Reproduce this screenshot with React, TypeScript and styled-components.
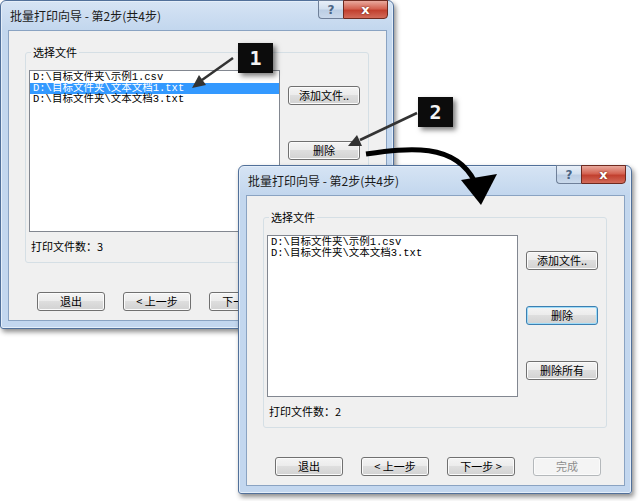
import React from 'react';
import styled, { createGlobalStyle } from 'styled-components';

const Global = createGlobalStyle`
  html, body { margin: 0; padding: 0; background: #fff; }
  body { font-family: "Noto Sans CJK SC", "Noto Sans", sans-serif; }
`;

const Canvas = styled.div`
  position: relative;
  width: 640px;
  height: 501px;
  overflow: hidden;
  background: #fff;
`;

const Window = styled.div<{ $x: number; $y: number }>`
  position: absolute;
  left: ${p => p.$x}px;
  top: ${p => p.$y}px;
  width: 394px;
  height: 329px;
  box-sizing: border-box;
  display: flex;
  flex-direction: column;
  border: 1px solid #51709a;
  border-radius: 6px 6px 3px 3px;
  background: linear-gradient(#d6e4f4, #c3d7ee 28px, #c3d7ef);
  box-shadow: 2px 3px 5px rgba(0, 0, 0, 0.45), inset 0 0 0 1px #e4eef9;
  padding: 0 6px 7px 7px;
`;

const TitleBar = styled.div`
  height: 29px;
  flex: none;
  display: flex;
  justify-content: space-between;
  align-items: flex-start;
  margin-right: -1px;
`;

const TitleText = styled.div`
  margin: 7px 0 0 2px;
  font-size: 12px;
  line-height: 16px;
  color: #1a1a1a;
`;

const CaptionButtons = styled.div`
  display: flex;
  margin-top: -1px;
`;

const HelpBtn = styled.div`
  width: 25px;
  height: 19px;
  box-sizing: border-box;
  border: 1px solid #6f8099;
  border-right: none;
  border-radius: 0 0 0 4px;
  background: linear-gradient(#e8eff8, #d3e0ef 45%, #bccee4 55%, #cad9eb);
  display: flex;
  align-items: center;
  justify-content: center;
  font: bold 12px "DejaVu Sans", sans-serif;
  color: #4b6584;
`;

const CloseBtn = styled.div`
  width: 45px;
  height: 19px;
  box-sizing: border-box;
  border: 1px solid #6e2a20;
  border-radius: 0 0 4px 0;
  background: linear-gradient(#e9a99d, #d46352 45%, #c2402f 55%, #d26b5a);
  display: flex;
  align-items: center;
  justify-content: center;
  font: bold 13px "DejaVu Sans", sans-serif;
  color: #fff;
  text-shadow: 0 0 2px #5a1a12;
`;

const Client = styled.div`
  flex: 1;
  background: #f0f0f0;
  border: 1px solid #8aa3c2;
  padding: 21px 0 0 16px;
  display: flex;
  flex-direction: column;
`;

const GroupBox = styled.div`
  position: relative;
  width: 344px;
  height: 211px;
  box-sizing: border-box;
  border: 1px solid #d5dfe5;
  border-radius: 3px;
  padding: 17px 0 0 3px;
  display: flex;
  flex-direction: column;
`;

const GroupLabel = styled.span`
  position: absolute;
  top: -8px;
  left: 5px;
  padding: 0 2px;
  background: #f0f0f0;
  font-size: 11px;
  line-height: 14px;
  color: #000;
`;

const GroupRow = styled.div`
  display: flex;
  align-items: flex-start;
`;

const ListBox = styled.div`
  width: 251px;
  height: 162px;
  box-sizing: border-box;
  border: 1px solid #828790;
  background: #fff;
  padding: 1px 0 0 0;
`;

const ListItem = styled.div<{ $selected?: boolean }>`
  height: 11px;
  line-height: 11px;
  padding-left: 3px;
  white-space: nowrap;
  font-family: "Liberation Mono", "Noto Sans CJK SC", monospace;
  font-size: 10.5px;
  color: ${p => (p.$selected ? '#fff' : '#000')};
  background: ${p => (p.$selected ? '#3399ff' : 'transparent')};
`;

const SideButtons = styled.div`
  display: flex;
  flex-direction: column;
  gap: 36px;
  margin-left: 8px;
  padding-top: 16px;
`;

const Button = styled.div<{ $w?: number; $focus?: boolean; $disabled?: boolean }>`
  width: ${p => p.$w ?? 68}px;
  height: 19px;
  box-sizing: border-box;
  border: 1px solid ${p => (p.$focus ? '#3c7fb1' : p.$disabled ? '#b4b8bb' : '#707070')};
  border-radius: 3px;
  background: ${p =>
    p.$disabled
      ? '#f4f4f4'
      : 'linear-gradient(#f4f4f4, #ececec 45%, #dedede 50%, #d2d2d2)'};
  box-shadow: ${p => (p.$focus ? 'inset 0 0 0 1px #9fdcf8' : 'inset 0 0 0 1px #fbfbfb')};
  display: flex;
  align-items: center;
  justify-content: center;
  font-size: 11px;
  line-height: 13px;
  color: ${p => (p.$disabled ? '#8d8d8d' : '#000')};
`;

const Count = styled.div`
  margin: 8px 0 0 2px;
  font-size: 11px;
  line-height: 13px;
  color: #000;
`;

const BottomRow = styled.div`
  display: flex;
  gap: 18px;
  margin: 29px 0 0 12px;
`;

const Badge = styled.div<{ $x: number; $y: number }>`
  position: absolute;
  left: ${p => p.$x}px;
  top: ${p => p.$y}px;
  width: 35px;
  height: 30px;
  background: #0c0c0c;
  box-shadow: 3px 3px 5px rgba(0, 0, 0, 0.5);
  display: flex;
  align-items: center;
  justify-content: center;
  font: bold 20px "DejaVu Sans Mono", monospace;
  color: #f4f4f4;
`;

const Overlay = styled.svg`
  position: absolute;
  left: 0;
  top: 0;
  pointer-events: none;
`;

type DialogProps = {
  x: number;
  y: number;
  items: string[];
  selected?: number;
  focusDelete?: boolean;
};

const Dialog: React.FC<DialogProps> = ({ x, y, items, selected, focusDelete }) => (
  <Window $x={x} $y={y}>
    <TitleBar>
      <TitleText>批量打印向导 - 第2步(共4步)</TitleText>
      <CaptionButtons>
        <HelpBtn>?</HelpBtn>
        <CloseBtn>x</CloseBtn>
      </CaptionButtons>
    </TitleBar>
    <Client>
      <GroupBox>
        <GroupLabel>选择文件</GroupLabel>
        <GroupRow>
          <ListBox>
            {items.map((it, i) => (
              <ListItem key={i} $selected={i === selected}>
                {it}
              </ListItem>
            ))}
          </ListBox>
          <SideButtons>
            <Button $w={72}>添加文件..</Button>
            <Button $w={72} $focus={focusDelete}>删除</Button>
            <Button $w={72}>删除所有</Button>
          </SideButtons>
        </GroupRow>
        <Count>打印文件数：{items.length}</Count>
      </GroupBox>
      <BottomRow>
        <Button>退出</Button>
        <Button>&lt; 上一步</Button>
        <Button>下一步 &gt;</Button>
        <Button $disabled>完成</Button>
      </BottomRow>
    </Client>
  </Window>
);

export default function App() {
  return (
    <Canvas>
      <Global />
      <Dialog
        x={0}
        y={0}
        items={[
          'D:\\目标文件夹\\示例1.csv',
          'D:\\目标文件夹\\文本文档1.txt',
          'D:\\目标文件夹\\文本文档3.txt',
        ]}
        selected={1}
      />
      <Badge $x={238} $y={43}>1</Badge>
      <Badge $x={418} $y={97}>2</Badge>
      <Overlay width={640} height={501} viewBox="0 0 640 501">
        <line x1={233} y1={58} x2={202} y2={80} stroke="#333" strokeWidth={2.5} />
        <polygon points="192,88 206,85 199,75" fill="#333" />
        <line x1={417} y1={113} x2={360} y2={140} stroke="#333" strokeWidth={2.5} />
        <polygon points="348,146 362,146 357,135" fill="#333" />
      </Overlay>
      <Dialog
        x={238}
        y={165}
        items={['D:\\目标文件夹\\示例1.csv', 'D:\\目标文件夹\\文本文档3.txt']}
        focusDelete
      />
      <Overlay width={640} height={501} viewBox="0 0 640 501">
        <path d="M366 154 C 408 148, 455 142, 475 182" stroke="#000" strokeWidth={5} fill="none" />
        <polygon points="481,205 461,180 497,174" fill="#000" />
      </Overlay>
    </Canvas>
  );
}
